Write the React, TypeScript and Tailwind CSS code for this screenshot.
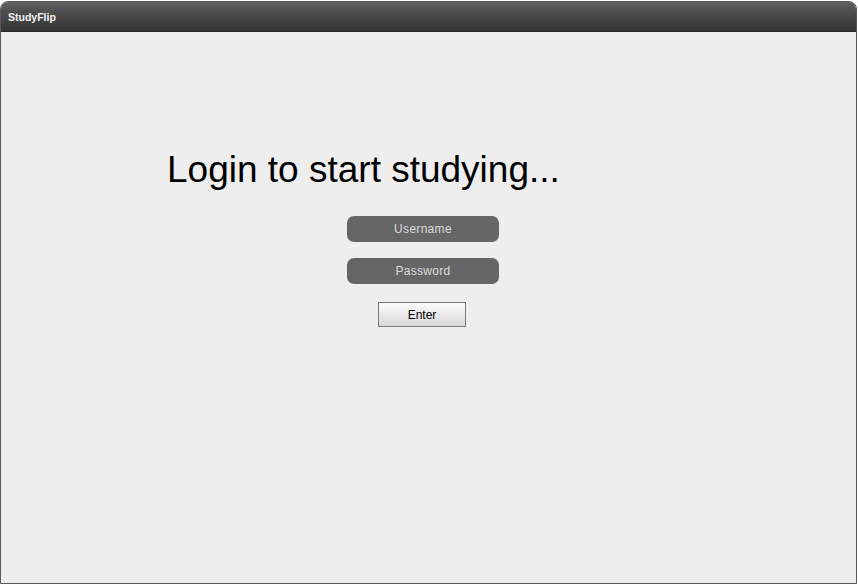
import React from 'react';

const App: React.FC = () => {
  return (
    <div className="w-[858px] h-[584px] bg-white font-['Liberation_Sans',Arial,sans-serif]">
      <div className="w-[857px] h-[583px] flex flex-col rounded-t-[8px] border border-[#5a5a5a] bg-[#eeeeee] overflow-hidden mt-[1px]">
        <div className="h-[30px] shrink-0 flex items-center px-[7px] pt-[3px] bg-gradient-to-b from-[#5e5e5e] to-[#333333] border-b border-[#2a2a2a]">
          <span className="text-[10.5px] font-bold text-[#f4f4f4]">StudyFlip</span>
        </div>
        <div className="flex-1 flex flex-col pt-[116px]">
          <h1 className="ml-[166px] text-[37px] leading-[44px] text-black font-normal">Login to start studying...</h1>
          <div className="ml-[346px] mt-[24px] flex flex-col items-start">
            <input
              placeholder="Username"
              className="w-[152px] h-[26px] rounded-[7px] bg-[#666666] text-center text-[12px] tracking-[0.3px] text-[#e4e4e4] placeholder:text-[#dcdcdc] outline-none"
            />
            <input
              type="password"
              placeholder="Password"
              className="w-[152px] h-[26px] mt-[16px] rounded-[7px] bg-[#666666] text-center text-[12px] tracking-[0.3px] text-[#e4e4e4] placeholder:text-[#dcdcdc] outline-none"
            />
            <button className="ml-[31px] mt-[18px] w-[88px] h-[25px] border border-[#7a7a7a] bg-gradient-to-b from-[#fbfbfb] to-[#d8d8d8] text-[12px] text-black">
              Enter
            </button>
          </div>
        </div>
      </div>
    </div>
  );
};

export default App;
